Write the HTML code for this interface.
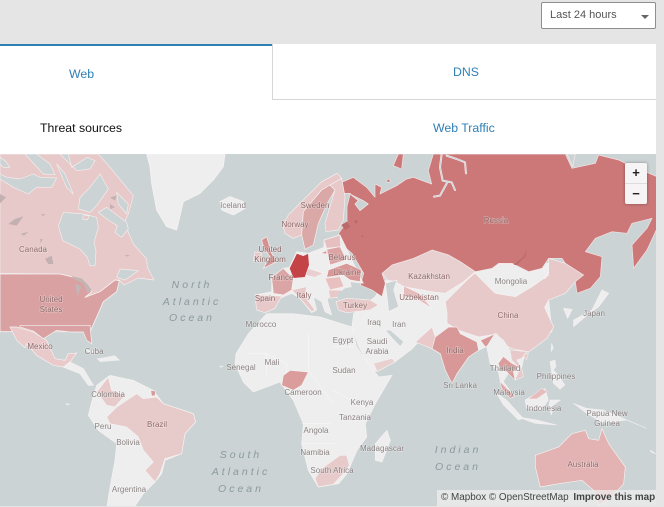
<!DOCTYPE html>
<html><head><meta charset="utf-8"><style>
html,body{margin:0;padding:0;width:664px;height:507px;overflow:hidden;background:#e5e5e5;font-family:"Liberation Sans",sans-serif}
#wrap{position:relative;width:664px;height:507px;overflow:hidden}
.abs{position:absolute}
#dd{left:541px;top:2px;width:113px;height:25px;background:#fff;border:1px solid #8e8e8e;border-radius:2px;font-size:11px;color:#555;line-height:25px;text-indent:8px}
#dd i{position:absolute;right:6px;top:12px;border-left:4px solid transparent;border-right:4px solid transparent;border-top:4px solid #666}
#panel{left:0;top:44px;width:656px;height:110px;background:#fff}
#bar{left:0;top:44px;width:272px;height:2px;background:#2d7fb5}
#dns{left:272px;top:44px;width:384px;height:56px;border-left:1px solid #d6d6d6;border-bottom:1px solid #d6d6d6;box-sizing:border-box}
.t{font-size:12.3px;white-space:nowrap}
.b{color:#2f7fb6}
svg{position:absolute;left:0;top:154px}
svg text{font-family:"Liberation Sans",sans-serif;font-size:8px;text-anchor:middle;fill:#8a8080;stroke:rgba(255,255,255,.35);stroke-width:1.2px;paint-order:stroke}
svg text.d{fill:#8f6868}
svg text.o{font-style:italic;font-size:10.5px;letter-spacing:3px;fill:#8b9a9d;stroke:none}
#zoom{left:625px;top:163px;width:22px;height:41px;background:#f6f4f4;border-radius:2px;box-shadow:0 0 3px rgba(0,0,0,.35)}
#zoom div{position:absolute;left:0;width:22px;text-align:center;font-weight:bold;color:#222;font-size:13px;line-height:20px}
#attr{left:437px;top:490px;width:219px;height:16px;background:rgba(240,240,240,.72);font-size:9.9px;line-height:16px;color:#444;text-indent:4px;white-space:nowrap}
</style></head><body><div id="wrap">
<div class="abs" id="dd">Last 24 hours<i></i></div>
<div class="abs" id="panel"></div>
<div class="abs" id="bar"></div>
<div class="abs" id="dns"></div>
<div class="abs t b" style="left:69px;top:67px">Web</div>
<div class="abs t b" style="left:453px;top:65px">DNS</div>
<div class="abs t" style="left:40px;top:121px;color:#111">Threat sources</div>
<div class="abs t b" style="left:433px;top:121px">Web Traffic</div>

<svg width="656" height="352" viewBox="0 154 656 352">
<rect x="0" y="154" width="656" height="352" fill="#cbd3d4"/>
<!-- Canada / N America -->
<g transform="translate(0,154) scale(.33333)" stroke="#f4eeee" stroke-width="2" stroke-linejoin="round">
<polygon fill="#e8c9c9" points="0,0 295,0 330,40 400,125 385,180 375,200 385,235 400,270 440,315 442,340 462,378 415,372 372,393 358,378 345,378 300,413 258,428 275,413 262,393 240,373 215,368 180,360 0,358"/>
<g fill="#cbd3d4">
<polygon points="175,215 188,260 240,285 262,310 270,335 285,335 288,290 282,265 295,220 290,190 250,180 190,175"/>
<polygon points="240,130 270,100 300,60 325,105 290,155 270,175 235,165"/>
<polygon points="295,175 320,160 380,205 385,225 365,250 345,235 352,215 320,195"/>
<polygon points="0,75 40,100 85,120 110,100 155,100 170,72 120,70 100,60 60,75 20,70 0,60"/>
<polygon points="75,0 130,60 165,62 150,30 110,0"/>
<polygon points="170,30 200,100 220,120 195,60"/>
<polygon points="180,0 230,50 270,45 285,20 262,10 215,40 205,0"/>
<polygon points="0,10 15,20 30,40 10,40 0,30"/>
<polygon points="350,115 385,150 380,180 355,150"/>
<polygon points="360,345 415,350 375,378 350,370"/>
</g>
<polygon fill="#e8c9c9" points="250,185 268,185 262,198 248,195"/>
<g fill="#c3b0b0" stroke="none"><polygon points="25,210 45,195 70,187 50,215"/><polygon points="0,120 18,130 0,148"/><polygon points="135,315 155,305 160,330 145,330"/><polygon points="62,240 85,233 72,245"/><polygon points="125,180 135,180 128,188"/><polygon points="330,130 350,125 345,140"/><polygon points="330,150 345,160 330,165"/><polygon points="375,303 390,303 380,308"/><polygon points="120,255 128,255 122,268"/></g>
</g>
<g transform="translate(0,150) scale(.33333)" stroke="#f6f2f2" stroke-width="2.5" stroke-linejoin="round">
<polygon fill="#d9a1a1" points="0,372 180,372 215,380 240,385 262,405 275,425 255,442 300,425 345,390 358,392 350,425 310,455 295,490 270,545 0,545"/>
<g fill="#c5b4b4" stroke="none"><polygon points="215,378 245,385 262,402 275,420 262,430 250,400 225,390"/><polygon points="225,400 245,410 232,440"/></g>
<polygon fill="#eee" points="440,12 675,12 670,50 640,90 600,130 550,155 530,240 500,230 470,180 455,100 450,50"/>
<polygon fill="#eee" points="660,155 690,140 730,155 735,175 700,195 665,180"/>
</g>
<!-- Africa, S America -->
<g transform="translate(0,327) scale(.33333)" stroke="#f6f2f2" stroke-width="2">
<polygon fill="#e9c9c9" points="30,0 50,0 100,15 140,40 165,95 195,100 205,80 230,78 210,105 190,120 160,115 110,85 80,50 75,62 50,40"/>
<polygon fill="#d9a1a1" points="60,-5 270,-5 275,50 260,40 250,15 210,15 170,10 130,35 100,12 60,0"/>
<polygon fill="#eee" points="190,120 210,105 250,125 280,175 265,175 240,140"/>
<polygon fill="#eee" points="275,225 290,175 330,145 400,160 460,190 490,230 580,260 587,285 555,320 545,380 495,400 485,440 465,465 430,500 400,545 320,545 330,480 345,400 350,350 295,310 265,265"/>
<polygon fill="#e7caca" points="320,270 350,240 410,200 430,215 470,210 490,230 580,260 587,285 555,320 545,380 495,395 480,440 465,465 435,430 460,405 430,370 415,330 380,300 330,290"/>
<polygon fill="#e7caca" points="290,195 325,150 335,190 375,205 345,240 320,235"/>
<polygon fill="#d59a9a" points="452,190 466,192 466,205 455,208"/>
<g fill="#eee" stroke="none"><polygon points="250,65 300,75 270,80"/><polygon points="290,95 345,85 360,100 300,105"/><polygon points="198,228 212,232 200,235"/><polygon points="660,115 672,118 660,122"/></g>
<polygon fill="#eee" points="708,80 745,20 800,-40 880,-40 960,-30 1056,0 1070,60 1136,150 1176,145 1126,230 1096,290 1100,330 1071,370 1041,440 1016,470 955,480 925,430 905,350 910,290 880,220 858,190 840,165 760,195 730,165 705,110"/>
<g fill="none" stroke="#fafafa" stroke-width="1.5"><path d="M745,80L800,80L860,110L860,145M800,80L800,150M925,20L925,130L970,190L1000,230M1000,60L1060,60M905,290L990,290M905,350L1010,350M1000,190L1090,240"/></g>
<polygon fill="#db9c9c" points="850,145 870,130 925,135 905,175 880,190 845,175"/>
<polygon fill="#e7caca" points="945,455 955,480 1000,472 1030,440 1048,415 1040,385 1020,385 985,410 965,425"/>
</g>
<!-- Asia -->
<g transform="translate(332,150) scale(.33333)" stroke="#f6f2f2" stroke-width="2" stroke-linejoin="round">
<polygon fill="#eee" points="130,440 150,400 300,300 500,340 700,340 650,450 660,545 620,570 590,606 540,596 500,580 460,591 440,601 300,596 260,575 240,597 190,635 125,665 80,590 60,530 65,490"/>
<polygon fill="#e8c9c9" points="340,455 400,395 430,368 480,420 640,385 650,370 650,325 700,340 755,375 730,395 700,430 650,450 638,472 665,531 645,565 590,606 540,596 510,581 495,552 440,561 380,541 345,520 345,490"/>
<polygon fill="#e9d0d0" points="150,370 180,345 245,325 300,300 350,315 385,335 430,365 395,395 340,430 300,425 215,410 190,395 165,390"/>
<polygon fill="#eee" points="430,370 455,352 500,340 540,340 590,365 630,355 650,375 600,410 550,440 490,430 460,400"/>
<polygon fill="#e6bcbc" points="215,408 262,430 300,475 245,442 215,440"/>
<polygon fill="#e9c9c9" points="250,576 300,531 310,561 325,611 300,596"/>
<polygon fill="#d89898" points="310,561 350,531 375,531 385,551 435,576 440,601 410,621 375,671 360,701 340,661 325,611 300,596"/>
<polygon fill="#d89898" points="445,571 490,551 495,571 460,591"/>
<polygon fill="#e8d0d0" points="125,640 180,625 190,635 135,665"/>
<polygon fill="#eee" points="130,931 130,881 165,841 175,871 150,936"/>
<polygon fill="#e3b2b2" points="610,916 680,891 720,851 760,841 770,866 800,871 810,836 830,881 880,951 875,1001 830,1051 800,1065 785,1021 750,991 680,1001 625,1011 610,951"/>
<polygon fill="#eee" points="955,901 970,911 958,906"/>
<polygon fill="#eee" points="810,420 830,430 800,470 760,500 725,530 725,510 780,480 795,450"/>
<polygon fill="#eee" points="695,475 720,478 707,505"/>
<polygon fill="#cc7878" stroke="#f3e4e4" points="304,12 700,12 720,55 790,40 800,15 860,30 880,40 975,80 975,235 945,300 905,355 900,285 945,235 960,205 900,220 885,250 840,245 790,265 760,305 810,320 805,380 775,415 735,430 730,395 755,375 700,340 690,325 650,325 630,355 590,365 540,340 500,340 480,355 430,365 385,335 350,315 300,300 245,325 180,345 150,370 160,400 150,440 120,420 85,405 95,370 60,310 25,280 20,250 45,215 45,170 55,130 25,130 29,97 64,82 104,112 129,142 129,102 149,112 144,132 194,107 224,87 244,82 299,102 289,62"/>
<polygon fill="#cc7878" stroke="#f3e4e4" points="184,47 199,12 214,12 209,57"/>
<polygon fill="#cc7878" stroke="#f3e4e4" points="164,90 172,87 175,95 166,98"/>
<g fill="#cbd3d4" stroke="#f6eeee"><polygon points="705,12 730,12 722,50"/></g>
<g fill="#bb6a6a" stroke="none"><polygon points="28,225 45,215 55,230 40,240"/><polygon points="545,345 575,320 585,295 580,320 555,345"/><circle cx="72" cy="215" r="5"/><circle cx="91" cy="259" r="3"/></g>
<polygon fill="#cbd3d4" points="160,400 195,390 185,420 200,470 170,485 165,440"/>
<polygon fill="#cbd3d4" points="159,540 175,540 215,575 205,590 185,570"/>
</g>
<!-- Russia north coast details -->
<g transform="translate(340,154) scale(.33333)" fill="none" stroke-linejoin="round" stroke-linecap="round">
<polygon fill="#cbd3d4" stroke="#f6eeee" stroke-width="2" points="30,120 70,140 85,150 60,170 45,150 55,140"/>
<path stroke="#f6eeee" stroke-width="6" d="M305,0L300,40L308,80L335,85L345,108M322,85L300,125L282,128M320,5L350,15L375,25L378,58"/>
<path stroke="#cbd3d4" stroke-width="3" d="M305,0L300,40L308,80L335,85L345,108M322,85L300,125L282,128M320,5L350,15L375,25L378,58"/>
</g>
<!-- SE Asia -->
<g transform="translate(470,330) scale(.33333)" stroke="#f6f2f2" stroke-width="1.5" stroke-linejoin="round">
<polygon fill="#eee" points="50,50 75,10 100,30 120,60 170,65 160,90 155,115 160,140 135,150 115,130 100,155 135,200 120,205 95,175 85,125 60,100"/>
<polygon fill="#e8c9c9" points="120,60 170,65 155,85 140,90 155,115 160,140 135,150 150,115 125,90"/>
<polygon fill="#db9c9c" points="85,100 100,80 125,100 145,110 130,125 135,150 110,125 90,120"/>
<polygon fill="#e0a8a8" points="90,155 135,200 120,205 95,175"/>
<polygon fill="#eee" points="165,210 225,175 235,210 215,240 170,235"/>
<polygon fill="#e6bcbc" points="175,207 215,175 232,185 200,207"/>
<polygon fill="#eee" points="80,190 110,210 160,265 145,270 100,225"/>
<polygon fill="#eee" points="140,260 200,270 260,285 195,280"/>
<polygon fill="#eee" points="240,210 272,210 250,225 245,255 235,235"/>
<polygon fill="#eee" points="240,95 255,90 258,110 250,120 260,130 285,165 270,178 250,160"/>
<polygon fill="#eee" points="245,40 250,55 243,65"/>
<polygon fill="#eee" points="310,220 350,235 400,240 460,265 530,295 470,270 400,280 350,250"/>
<polygon fill="#e8c9c9" points="160,75 175,70 170,90"/>
</g>
<!-- Europe -->
<g transform="translate(250,190) scale(.33333)" stroke="#f6f0f0" stroke-width="2" stroke-linejoin="round">
<polygon fill="#eee" points="15,315 65,305 65,262 100,235 118,232 140,185 175,190 222,172 222,150 270,135 340,280 300,275 305,295 280,300 262,325 245,305 232,330 245,375 225,365 215,335 190,320 200,360 185,368 150,325 125,310 90,325"/>
<polygon fill="#e8c9c9" points="98,105 115,75 155,35 190,0 215,-25 262,-50 275,-35 240,-15 215,0 160,65 155,135 130,145 105,130"/>
<polygon fill="#dba8a8" points="155,135 160,65 215,0 240,-15 255,0 232,40 205,100 190,165 165,178"/>
<polygon fill="#e8c9c9" points="225,100 240,50 255,0 240,-15 275,-35 285,20 280,90 265,120 228,125"/>
<polygon fill="#e6c0c0" points="222,150 270,135 272,170 230,175"/>
<polygon fill="#dba5a5" points="230,178 270,170 290,210 240,225"/>
<polygon fill="#eee" points="178,190 230,185 240,235 220,250 170,225"/>
<polygon fill="#d59999" points="212,190 228,182 232,192"/>
<polygon fill="#d89898" points="235,240 290,220 335,240 330,275 300,270 280,255 230,262"/>
<polygon fill="#e8c0c0" points="225,265 270,260 282,290 240,300"/>
<polygon fill="#e8d0d0" points="165,232 220,250 195,262 165,255"/>
<polygon fill="#e8c9c9" points="125,300 170,290 165,320 195,360 185,365 150,325"/>
<polygon fill="#e8c9c9" points="235,300 275,300 270,320 240,325"/>
<polygon fill="#dca5a5" points="65,262 100,235 130,265 125,300 100,315 70,310"/>
<polygon fill="#e8c9c9" points="15,315 95,318 75,355 45,368 20,360"/>
<polygon fill="#d68f8f" points="35,150 50,140 65,190 80,215 40,235 60,200 42,175"/>
<polygon fill="#e8c9c9" points="15,185 35,190 30,210 10,212"/>
<polygon fill="#c44346" points="118,235 140,190 160,197 175,190 178,225 165,262 130,265"/>
<polygon fill="#cbd3d4" stroke="none" points="262,312 285,295 310,290 340,310 362,330 290,325 262,330"/>
<polygon fill="#e8c9c9" points="258,335 290,325 360,330 385,345 360,360 290,368 265,360"/>
</g>
<text x="33" y="252" class="d">Canada</text><text x="51" y="302" class="d">United</text><text x="51" y="312" class="d">States</text>
<text x="233" y="208">Iceland</text><text x="315" y="208" class="d">Sweden</text><text x="295" y="227" class="d">Norway</text>
<text x="270" y="252" class="d">United</text><text x="270" y="262" class="d">Kingdom</text><text x="281" y="280" class="d">France</text><text x="265" y="301" class="d">Spain</text><text x="304" y="298" class="d">Italy</text><text x="261" y="327">Morocco</text>
<text x="192" y="288" class="o">North</text><text x="192" y="305" class="o">Atlantic</text><text x="192" y="321" class="o">Ocean</text>
<text x="496" y="223" class="d">Russia</text><text x="342" y="260" class="d">Belarus</text><text x="347" y="275" class="d">Ukraine</text><text x="429" y="279" class="d">Kazakhstan</text><text x="511" y="284">Mongolia</text><text x="419" y="300" class="d">Uzbekistan</text><text x="355" y="308" class="d">Turkey</text><text x="508" y="318" class="d">China</text><text x="374" y="325">Iraq</text><text x="399" y="327">Iran</text><text x="594" y="316">Japan</text>
<text x="40" y="349" class="d">Mexico</text><text x="94" y="354">Cuba</text><text x="272" y="365">Mali</text><text x="241" y="370">Senegal</text><text x="303" y="395">Cameroon</text><text x="108" y="397">Colombia</text><text x="157" y="427" class="d">Brazil</text><text x="103" y="429">Peru</text><text x="128" y="445">Bolivia</text><text x="129" y="492">Argentina</text><text x="316" y="433">Angola</text><text x="315" y="455">Namibia</text><text x="332" y="473">South Africa</text>
<text x="241" y="458" class="o">South</text><text x="241" y="475" class="o">Atlantic</text><text x="241" y="492" class="o">Ocean</text>
<text x="343" y="343">Egypt</text><text x="377" y="344">Saudi</text><text x="377" y="354">Arabia</text><text x="344" y="373">Sudan</text><text x="455" y="353" class="d">India</text><text x="460" y="388">Sri Lanka</text><text x="505" y="371">Thailand</text><text x="556" y="379">Philippines</text><text x="509" y="395">Malaysia</text><text x="544" y="411">Indonesia</text><text x="362" y="405">Kenya</text><text x="355" y="420">Tanzania</text><text x="382" y="451">Madagascar</text>
<text x="458" y="453" class="o">Indian</text><text x="458" y="470" class="o">Ocean</text>
<text x="607" y="416">Papua New</text><text x="607" y="426">Guinea</text><text x="583" y="467" class="d">Australia</text>
</svg>

<div class="abs" id="zoom"><div style="top:0">+</div><div style="top:20px;height:1px;background:#ddd"></div><div style="top:21px">&#8722;</div></div>
<div class="abs" id="attr">© Mapbox © OpenStreetMap <b style="margin-left:2px">Improve this map</b></div>
</div></body></html>
